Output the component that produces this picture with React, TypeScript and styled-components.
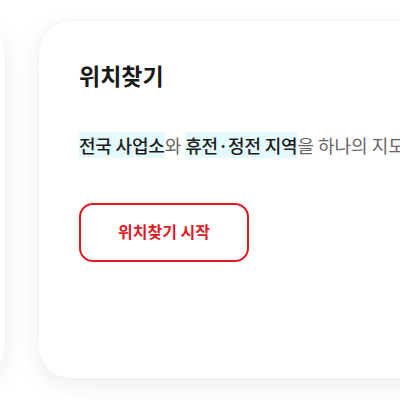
import React from 'react';
import styled, { createGlobalStyle } from 'styled-components';

const GlobalStyle = createGlobalStyle`
    html, body {
        margin: 0;
        padding: 0;
        background: #ffffff;
        overflow: hidden;
    }
    body {
        font-family: "Noto Sans CJK KR", "Noto Sans", sans-serif;
    }
`;

const Stage = styled.div`
    width: 400px;
    height: 400px;
    overflow: hidden;
    padding-top: 20px;
    box-sizing: border-box;
`;

const Track = styled.div`
    display: flex;
    gap: 32px;
    margin-left: -314px;
`;

const Card = styled.section<{ $wide?: boolean }>`
    flex: 0 0 ${p => (p.$wide ? 420 : 320)}px;
    height: 359px;
    box-sizing: border-box;
    padding: 38px 40px;
    background: #fff;
    border-radius: 32px;
    border: 1px solid #f2f2f5;
    box-shadow: 0 6px 24px rgba(0, 0, 0, 0.07);
    overflow: hidden;
`;

const Title = styled.h3`
    margin: 0;
    font-size: 23px;
    line-height: 32px;
    font-weight: 700;
    color: #1a1a1a;
`;

const Desc = styled.p`
    margin: 41px 0 0;
    font-size: 18px;
    line-height: 26px;
    color: #666;
    white-space: nowrap;
`;

const Mark = styled.span`
    background: #e4fafd;
    color: #1c1c1c;
    font-weight: 500;
    letter-spacing: -0.2px;
`;

const StartButton = styled.button`
    display: block;
    margin-top: 45px;
    width: 170px;
    height: 59px;
    border: 2px solid #e3191f;
    border-radius: 14px;
    background: #fff;
    color: #e3191f;
    font-family: inherit;
    font-size: 16px;
    font-weight: 700;
    padding: 0 0 4px;
    cursor: pointer;
`;

export default function App() {
    return <Stage>
        <GlobalStyle />
        <Track>
            <Card />
            <Card $wide>
                <Title>위치찾기</Title>
                <Desc>
                    <Mark>전국 사업소</Mark>와 <Mark>휴전·정전 지역</Mark>을 하나의 지도
                </Desc>
                <StartButton>위치찾기 시작</StartButton>
            </Card>
        </Track>
    </Stage>;
}
